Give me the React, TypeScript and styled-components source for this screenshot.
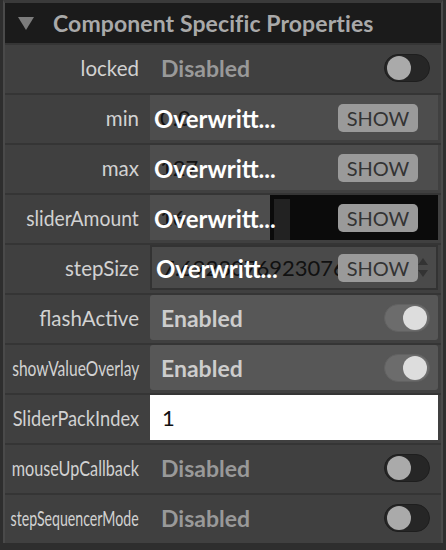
import React from 'react';
import styled, { createGlobalStyle } from 'styled-components';

const GlobalStyle = createGlobalStyle`
  html, body {
    margin: 0;
    padding: 0;
    background: #2e2e2e;
  }
  body {
    font-family: Lato, "Open Sans", sans-serif;
  }
`;

const Frame = styled.div`
  width: 446px;
  height: 550px;
  box-sizing: border-box;
  background: #2e2e2e;
  padding: 0 3px 0 3px;
  display: flex;
  flex-direction: column;
`;

const Panel = styled.div`
  border-top: 3px solid #3a3a3a;
  border-left: 2px solid #4a4a4a;
  border-right: 2px solid #4a4a4a;
  display: flex;
  flex-direction: column;
`;

const Header = styled.div`
  height: 40px;
  background: #1b1b1b;
  display: flex;
  align-items: center;
  gap: 19px;
  padding-left: 13px;
`;

const Arrow = styled.span`
  width: 0;
  height: 0;
  border-left: 8px solid transparent;
  border-right: 8px solid transparent;
  border-top: 13px solid #7c7c7c;
  margin-top: 1px;
`;

const Title = styled.span`
  color: #a9a9a9;
  font-weight: 700;
  font-size: 23px;
  letter-spacing: 0.1px;
`;

const Row = styled.div`
  height: 48px;
  border-top: 2px solid #353535;
  background: #404040;
  display: flex;
  padding-right: 3px;
`;

const LabelCell = styled.div`
  width: 145px;
  flex-shrink: 0;
  display: flex;
  align-items: center;
  justify-content: flex-end;
  padding-right: 11px;
  box-sizing: border-box;
  height: 45px;
`;

const Label = styled.span<{ $squeeze?: number }>`
  color: #d2d2d2;
  font-size: 20.5px;
  white-space: nowrap;
  display: inline-block;
  transform: scaleX(${(p) => p.$squeeze ?? 1});
  transform-origin: right center;
`;

const ValueBox = styled.div<{ $bg?: string; $radius?: number; $border?: boolean }>`
  position: relative;
  flex: 1;
  height: 45px;
  box-sizing: border-box;
  background: ${(p) => p.$bg ?? 'transparent'};
  border-radius: ${(p) => p.$radius ?? 0}px;
  border: ${(p) => (p.$border ? '2px solid #333' : 'none')};
  display: flex;
  align-items: center;
  overflow: hidden;
`;

const StateText = styled.span<{ $on?: boolean }>`
  color: ${(p) => (p.$on ? '#cdcdcd' : '#999999')};
  font-weight: 700;
  font-size: 23px;
  padding-left: 11px;
  flex: 1;
`;

const Toggle = styled.div<{ $on?: boolean }>`
  width: 46px;
  height: 28px;
  border-radius: 14px;
  box-sizing: border-box;
  background: ${(p) => (p.$on ? '#6c6c6c' : '#262626')};
  border: 1px solid ${(p) => (p.$on ? '#626262' : '#1e1e1e')};
  margin-right: 8px;
  display: flex;
  align-items: center;
  justify-content: ${(p) => (p.$on ? 'flex-end' : 'flex-start')};
  padding: 0 2px;
`;

const Knob = styled.div<{ $on?: boolean }>`
  width: 24px;
  height: 24px;
  border-radius: 50%;
  background: ${(p) => (p.$on ? '#dddddd' : '#aaaaaa')};
`;

const RawValue = styled.span`
  color: #111;
  font-size: 22px;
  padding-left: 10px;
  white-space: nowrap;
`;

const Overwritten = styled.span`
  position: absolute;
  left: 4px;
  top: 50%;
  transform: translateY(-50%);
  color: #ffffff;
  font-weight: 700;
  font-size: 24px;
  white-space: nowrap;
`;

const ShowButton = styled.span<{ $inset?: boolean }>`
  position: absolute;
  left: ${(p) => (p.$inset ? 186 : 188)}px;
  top: ${(p) => (p.$inset ? 7 : 9)}px;
  width: 80px;
  height: 28px;
  border-radius: 5px;
  background: #9a9a9a;
  color: #333;
  font-size: 20px;
  display: flex;
  align-items: center;
  justify-content: center;
`;

const DarkSide = styled.div`
  position: absolute;
  left: 120px;
  top: 0;
  right: 0;
  bottom: 0;
  background: #0b0b0b;
`;

const DarkBar = styled.div`
  position: absolute;
  left: 4px;
  top: 4px;
  width: 16px;
  bottom: 0;
  background: #222;
`;

const Spinner = styled.svg`
  position: absolute;
  right: 8px;
  top: 10px;
`;

const TextField = styled.div`
  flex: 1;
  height: 45px;
  background: #ffffff;
  color: #111;
  font-size: 22px;
  display: flex;
  align-items: center;
  padding-left: 12px;
`;

const BottomSpace = styled.div`
  flex: 1;
  background: #2e2e2e;
`;

type BoolProps = { label: string; on?: boolean; squeeze?: number };

const BoolRow: React.FC<BoolProps> = ({ label, on, squeeze }) => (
  <Row>
    <LabelCell>
      <Label $squeeze={squeeze}>{label}</Label>
    </LabelCell>
    <ValueBox $bg={on ? '#575757' : 'transparent'} $radius={on ? 3 : 0}>
      <StateText $on={on}>{on ? 'Enabled' : 'Disabled'}</StateText>
      <Toggle $on={on}>
        <Knob $on={on} />
      </Toggle>
    </ValueBox>
  </Row>
);

const App: React.FC = () => (
  <>
    <GlobalStyle />
    <Frame>
      <Panel>
        <Header>
          <Arrow />
          <Title>Component Specific Properties</Title>
        </Header>
        <BoolRow label="locked" />
        <Row>
          <LabelCell>
            <Label>min</Label>
          </LabelCell>
          <ValueBox $bg="#4d4d4d">
            <RawValue>0.0</RawValue>
            <Overwritten>Overwritt...</Overwritten>
            <ShowButton>SHOW</ShowButton>
          </ValueBox>
        </Row>
        <Row>
          <LabelCell>
            <Label>max</Label>
          </LabelCell>
          <ValueBox $bg="#4d4d4d">
            <RawValue>127</RawValue>
            <Overwritten>Overwritt...</Overwritten>
            <ShowButton>SHOW</ShowButton>
          </ValueBox>
        </Row>
        <Row>
          <LabelCell>
            <Label $squeeze={0.94}>sliderAmount</Label>
          </LabelCell>
          <ValueBox $bg="#4d4d4d">
            <RawValue>16</RawValue>
            <DarkSide>
              <DarkBar />
            </DarkSide>
            <Overwritten>Overwritt...</Overwritten>
            <ShowButton>SHOW</ShowButton>
          </ValueBox>
        </Row>
        <Row>
          <LabelCell>
            <Label>stepSize</Label>
          </LabelCell>
          <ValueBox $bg="#4a4a4a" $border>
            <RawValue>7.692307692307692</RawValue>
            <Overwritten>Overwritt...</Overwritten>
            <ShowButton $inset>SHOW</ShowButton>
            <Spinner width="10" height="22" viewBox="0 0 10 22">
              <path d="M5 1 L10 8 L0 8 Z" fill="#333" />
              <path d="M0 13 L10 13 L5 20 Z" fill="#333" />
            </Spinner>
          </ValueBox>
        </Row>
        <BoolRow label="flashActive" on />
        <BoolRow label="showValueOverlay" on squeeze={0.76} />
        <Row>
          <LabelCell>
            <Label $squeeze={0.89}>SliderPackIndex</Label>
          </LabelCell>
          <TextField>1</TextField>
        </Row>
        <BoolRow label="mouseUpCallback" squeeze={0.79} />
        <BoolRow label="stepSequencerMode" squeeze={0.69} />
      </Panel>
      <BottomSpace />
    </Frame>
  </>
);

export default App;
